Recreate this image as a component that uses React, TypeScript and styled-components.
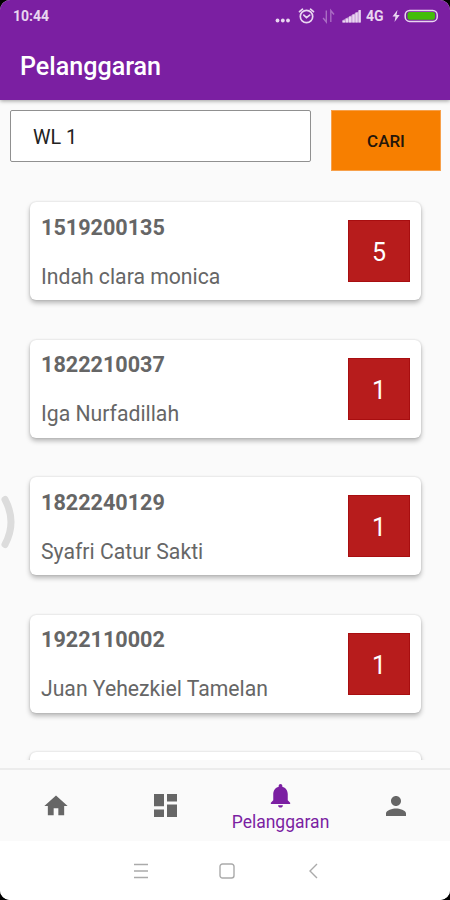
import React from "react";
import styled, { createGlobalStyle } from "styled-components";

const GlobalStyle = createGlobalStyle`
  * { box-sizing: border-box; }
  body { margin: 0; background: #000; font-family: Roboto, "Noto Sans", sans-serif; }
`;

const Screen = styled.main`
  position: relative;
  width: 450px;
  height: 900px;
  display: flex;
  flex-direction: column;
  overflow: hidden;
  border-radius: 10px;
  background: #fafafa;
`;

const Header = styled.header`
  flex: none;
  height: 100px;
  background: #7b1fa2;
  color: #fff;
  box-shadow: 0 1px 4px rgba(0, 0, 0, 0.38);
`;

const StatusBar = styled.div`
  height: 33px;
  padding: 0 11px 0 13px;
  display: flex;
  align-items: center;
  justify-content: space-between;
  color: #e9d6f0;
`;

const Clock = styled.span`
  font-size: 14px;
  font-weight: 700;
  line-height: 33px;
`;

const Title = styled.h1`
  margin: 0;
  padding-left: 20px;
  font-size: 25.1px;
  font-weight: 500;
  line-height: 68px;
`;

const SearchRow = styled.form`
  flex: none;
  display: flex;
  justify-content: space-between;
  align-items: flex-start;
  height: 72px;
  padding: 10px 9px 0 10px;
`;

const SearchInput = styled.input`
  width: 301px;
  height: 52px;
  padding: 3px 22px 0;
  border: 1px solid #909090;
  border-radius: 2px;
  background: #fff;
  color: #222;
  font: 400 19.8px Roboto, sans-serif;
  outline: none;
`;

const SearchButton = styled.button`
  width: 110px;
  height: 61px;
  padding: 1px 0 0;
  border: 1px solid #f7a04a;
  background: #f77f00;
  color: #24160a;
  font: 500 17px Roboto, sans-serif;
`;

const List = styled.section`
  flex: none;
  height: 588px;
  padding: 30px 29px 0 30px;
  display: flex;
  flex-direction: column;
  gap: 39.6px;
  overflow: hidden;
`;

const Card = styled.article`
  flex: none;
  height: 98px;
  padding: 0 11px;
  display: flex;
  align-items: center;
  justify-content: space-between;
  border-radius: 6px;
  background: #fff;
  color: #666;
  box-shadow: 0 3px 5px rgba(0, 0, 0, 0.27), 0 0 2px rgba(0, 0, 0, 0.16);
`;

const Student = styled.div`
  display: flex;
  flex-direction: column;
  gap: 23px;
  padding-top: 2px;
`;

const StudentId = styled.strong`
  font-size: 21.6px;
  font-weight: 700;
  line-height: 26px;
`;

const StudentName = styled.span`
  font-size: 21.2px;
  line-height: 26px;
`;

const Count = styled.div`
  width: 62px;
  height: 62px;
  border: 1px solid #a80e10;
  background: #b71c1c;
  color: #fff;
  font-size: 25px;
  line-height: 64px;
  text-align: center;
`;

const Tabs = styled.nav`
  flex: none;
  height: 73px;
  margin-top: 8px;
  padding: 0 0 0 1px;
  border-top: 2px solid #ececec;
  background: #fafafa;
  display: grid;
  grid-template-columns: 110px 109px 121px 109px;
`;

const Tab = styled.a<{ $active?: boolean }>`
  display: flex;
  flex-direction: column;
  align-items: center;
  justify-content: ${(p) => (p.$active ? "flex-start" : "center")};
  padding-top: ${(p) => (p.$active ? "11px" : "0")};
  color: ${(p) => (p.$active ? "#7b1fa2" : "#666")};
  font-size: 17.5px;
  line-height: 24px;
`;

const SystemBar = styled.footer`
  flex: 1;
  padding-left: 3px;
  background: #fff;
  display: flex;
  justify-content: center;
  align-items: center;
  gap: 70px;
  color: #aaa;
`;

const SideHandle = styled.svg`
  position: absolute;
  left: 0;
  top: 494px;
`;

const students = [
  { id: "1519200135", name: "Indah clara monica", count: 5 },
  { id: "1822210037", name: "Iga Nurfadillah", count: 1 },
  { id: "1822240129", name: "Syafri Catur Sakti", count: 1 },
  { id: "1922110002", name: "Juan Yehezkiel Tamelan", count: 1 },
];

const StatusIcons = () => (
  <svg width="166" height="24" viewBox="273 5 166 24" fill="currentColor">
    <circle cx="277.5" cy="20.5" r="1.9" />
    <circle cx="282.8" cy="20.5" r="1.9" />
    <circle cx="288" cy="20.5" r="1.9" />
    <g fill="none" stroke="currentColor" strokeWidth="1.7" strokeLinecap="round">
      <circle cx="306.5" cy="16.5" r="6.2" />
      <path d="M299.5 11.7l3-2.5M313.5 11.7l-3-2.5M303.8 15.1l2.7 2.5 3.2-2.5" />
    </g>
    <path
      d="M326.3 10.500v11.500l-3.200-4M330.800 22v-11.500l3.200 4"
      fill="none"
      stroke="currentColor"
      strokeWidth="1.4"
      opacity=".42"
    />
    <path d="M342.500 22.500v-2.300l18-10v12.300z" opacity=".55" />
    <path d="M342.500 20.500h2.600v2h-2.600zM345.700 18.500h2.600v4h-2.600zM349 16.500h2.500v6h-2.500zM352.300 14.500h2.400v8h-2.400zM355.400 12.500h2.300v10h-2.300zM358.500 10h2.300v12.500h-2.300z" />
    <text x="366" y="21" fontSize="14" fontWeight="700">4G</text>
    <path d="M397.500 10l-5 6.500h3l-1 5.500 5.200-7h-3.200z" />
    <rect x="405.200" y="10.400" width="32" height="11" rx="4.500" fill="none" stroke="currentColor" strokeWidth="1.500" />
    <rect x="407.500" y="12" width="27.500" height="7.800" rx="2.200" fill="#43bd08" />
  </svg>
);

const HomeIcon = () => (
  <svg width="28" height="28" viewBox="0 0 24 24" fill="currentColor">
    <path d="M10 20v-6h4v6h5v-8h3L12 3 2 12h3v8z" />
  </svg>
);

const DashboardIcon = () => (
  <svg width="23" height="23" viewBox="0 0 23 23" fill="currentColor">
    <path d="M0 0h10v12.300H0zM13 0h10v7.500H13zM0 15.400h10V23H0zM13 10.500h10V23H13z" />
  </svg>
);

const BellIcon = () => (
  <svg width="29" height="29" viewBox="0 0 24 24" fill="currentColor">
    <path d="M12 22c1.100 0 2-.9 2-2h-4c0 1.100.9 2 2 2zm6-6v-5c0-3.070-1.630-5.640-4.500-6.320V4c0-.83-.67-1.500-1.500-1.500s-1.500.67-1.500 1.500v.68C7.640 5.360 6 7.920 6 11v5l-2 2v1h16v-1z" />
  </svg>
);

const PersonIcon = () => (
  <svg width="30" height="30" viewBox="0 0 24 24" fill="currentColor">
    <path d="M12 12c2.210 0 4-1.790 4-4s-1.790-4-4-4-4 1.790-4 4 1.790 4 4 4zm0 2c-2.670 0-8 1.340-8 4v2h16v-2c0-2.660-5.330-4-8-4z" />
  </svg>
);

const SystemIcon = ({ d }: { d: string }) => (
  <svg width="16" height="16" viewBox="0 0 16 16" fill="none" stroke="currentColor" strokeWidth="1.400">
    <path d={d} />
  </svg>
);

export default function App() {
  return (
    <>
      <GlobalStyle />
      <Screen>
        <Header>
          <StatusBar>
            <Clock>10:44</Clock>
            <StatusIcons />
          </StatusBar>
          <Title>Pelanggaran</Title>
        </Header>
        <SearchRow>
          <SearchInput defaultValue="WL 1" />
          <SearchButton type="button">CARI</SearchButton>
        </SearchRow>
        <List>
          {students.map((s) => (
            <Card key={s.id}>
              <Student>
                <StudentId>{s.id}</StudentId>
                <StudentName>{s.name}</StudentName>
              </Student>
              <Count>{s.count}</Count>
            </Card>
          ))}
          <Card />
        </List>
        <Tabs>
          <Tab><HomeIcon /></Tab>
          <Tab><DashboardIcon /></Tab>
          <Tab $active>
            <BellIcon />
            Pelanggaran
          </Tab>
          <Tab><PersonIcon /></Tab>
        </Tabs>
        <SystemBar>
          <SystemIcon d="M1 1.500h14M1 8h14M1 14.500h14" />
          <SystemIcon d="M3.500 1h9a2.500 2.500 0 0 1 2.500 2.500v9a2.500 2.500 0 0 1-2.500 2.500h-9a2.500 2.500 0 0 1-2.500-2.500v-9a2.500 2.500 0 0 1 2.500-2.500z" />
          <SystemIcon d="M12 1L5 8l7 7" />
        </SystemBar>
        <SideHandle width="18" height="56" viewBox="0 0 18 56" fill="none">
          <path d="M5 5.500Q17 28 5 50.500" stroke="#dcdcdc" strokeWidth="7" strokeLinecap="round" />
        </SideHandle>
      </Screen>
    </>
  );
}
